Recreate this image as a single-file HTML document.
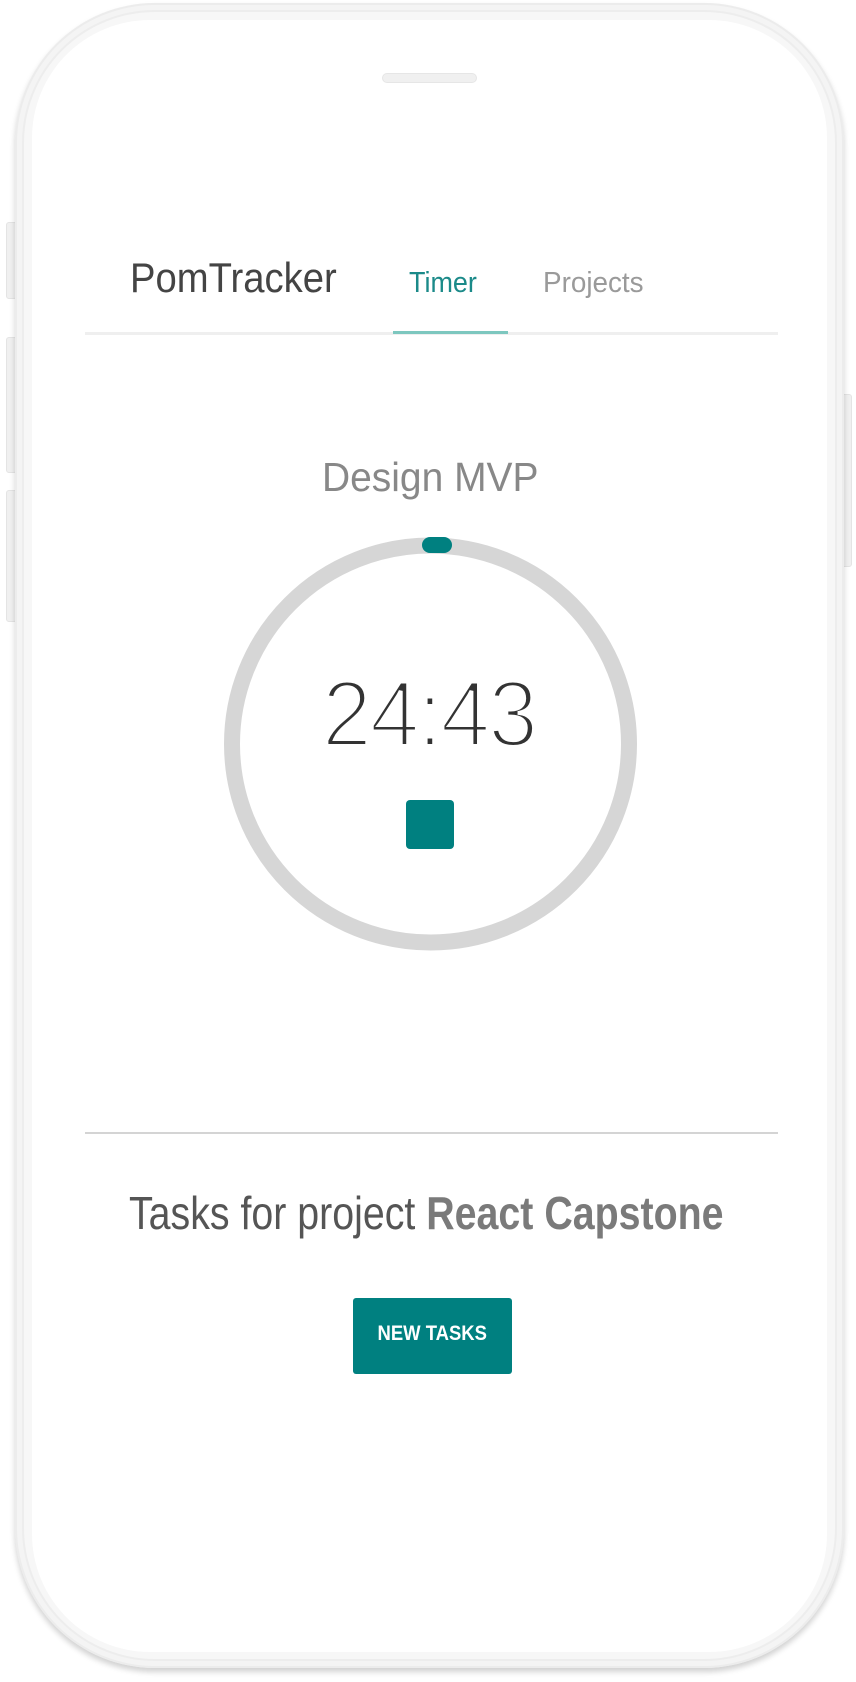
<!DOCTYPE html>
<html><head><meta charset="utf-8"><style>
html,body{margin:0;padding:0;background:#fff;}
body{width:856px;height:1682px;position:relative;overflow:hidden;font-family:"Liberation Sans",sans-serif;}
.phone{position:absolute;left:15px;top:3px;width:829px;height:1665px;border-radius:140px;background:#f4f4f4;box-shadow:0 4px 6px rgba(0,0,0,.18),inset 0 0 0 2px #ececec;}
.mid{position:absolute;left:7px;top:7px;right:7px;bottom:7px;border-radius:133px;background:#f7f7f7;border:2px solid #ededed;}
.screen{position:absolute;left:32px;top:20px;width:795px;height:1632px;border-radius:118px;background:#fff;}
.btn{position:absolute;width:9px;background:#f0f0f0;border:1px solid #e4e4e4;border-radius:3px;}
.abs{position:absolute;white-space:nowrap;}
</style></head><body>
<div class="btn" style="left:6px;top:222px;height:75px"></div>
<div class="btn" style="left:6px;top:337px;height:134px"></div>
<div class="btn" style="left:6px;top:490px;height:130px"></div>
<div class="btn" style="left:841px;top:394px;height:171px"></div>
<div class="phone"><div class="mid"></div></div>
<div class="screen"></div>
<div class="abs" style="left:382px;top:73px;width:95px;height:10px;border-radius:5px;background:#f0f0f0;border:1px solid #e6e6e6;box-sizing:border-box"></div>

<div class="abs" style="left:130px;top:254px;font-size:42px;line-height:48px;color:#444;transform-origin:0 0;transform:scaleX(0.91)">PomTracker</div>
<div class="abs" style="left:409px;top:266px;font-size:29px;line-height:34px;color:#1b8a89;transform-origin:0 0;transform:scaleX(0.93)">Timer</div>
<div class="abs" style="left:543px;top:266px;font-size:29px;line-height:34px;color:#9a9a9a;transform-origin:0 0;transform:scaleX(0.96)">Projects</div>
<div class="abs" style="left:85px;top:332px;width:693px;height:3px;background:#efefef"></div>
<div class="abs" style="left:393px;top:331px;width:115px;height:3px;background:#7dc7bf"></div>

<div class="abs" style="left:322px;top:453px;font-size:41px;line-height:48px;color:#888;transform-origin:0 0;transform:scaleX(0.95)">Design MVP</div>
<svg class="abs" style="left:0;top:0" width="856" height="1000">
<circle cx="430.5" cy="744" r="198.5" fill="none" stroke="#d6d6d6" stroke-width="16"/>
<rect x="422" y="537" width="30" height="16" rx="8" fill="#008080"/>
<rect x="406" y="800" width="48" height="49" rx="4" fill="#008080"/>
</svg>
<div class="abs" style="left:322px;top:664px;font-size:94px;line-height:100px;color:#333;-webkit-text-stroke:4px #fff;letter-spacing:-2px;transform-origin:0 0;transform:scaleX(0.95)">24:43</div>

<div class="abs" style="left:85px;top:1132px;width:693px;height:2px;background:#d4d4d4"></div>
<div class="abs" style="left:129px;top:1186px;font-size:46px;line-height:54px;color:#555;transform-origin:0 0;transform:scaleX(0.855)">Tasks for project <b style="color:#7a7a7a">React Capstone</b></div>

<div class="abs" style="left:353px;top:1298px;width:159px;height:76px;background:#008080;border-radius:3px;color:#fff;font-weight:bold;font-size:21px;text-align:center;line-height:72px"><span style="display:inline-block;transform:scaleX(0.88)">NEW TASKS</span></div>
</body></html>
